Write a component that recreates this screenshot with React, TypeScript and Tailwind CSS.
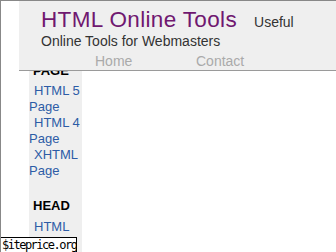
import React from "react";

const pages = [
  { label: "HTML 5" },
  { label: "HTML 4" },
  { label: "XHTML" },
];

export default function App() {
  return (
    <div className="relative flex h-[252px] w-[336px] flex-col overflow-hidden border-t border-l border-[#888] bg-white font-['Liberation_Sans',Arial,sans-serif]">
      {/* header bar */}
      <header className="ml-[18px] h-[70px] shrink-0 border-b border-[#9a9a9a] bg-[#efefef] pl-[22px] pt-[6px]">
        <div className="flex h-[26px] items-baseline">
          <span className="text-[22.5px] leading-[26px] tracking-[0.35px] text-[#701870]">HTML Online Tools</span>
          <span className="ml-[17px] text-[14px] leading-[16px] text-[#333]">Useful</span>
        </div>
        <div className="text-[14px] leading-[16px] text-[#333]">Online Tools for Webmasters</div>
        <nav className="mt-[4px] flex pl-[54px] text-[14px] leading-[16px] text-[#aaa]">
          <span className="w-[101px]">Home</span>
          <span>Contact</span>
        </nav>
      </header>

      {/* left menu */}
      <aside className="ml-[28px] w-[53px] flex-1 overflow-hidden bg-[#efefef] text-[13px] leading-[16px]">
        <div className="-mt-[8.5px]">
          <h3 className="mb-[4px] pl-[4px] font-bold text-black">PAGE</h3>
          {pages.map((p) => (
            <a key={p.label} href="#" className="block text-[#2d5ca6]">
              <span className="block whitespace-nowrap pl-[5px]">{p.label}</span>
              <span className="block">Page</span>
            </a>
          ))}
          <h3 className="mt-[19px] mb-[5px] pl-[4px] font-bold text-black">HEAD</h3>
          <a href="#" className="block whitespace-nowrap pl-[5px] text-[#2d5ca6]">
            HTML
          </a>
        </div>
      </aside>

      {/* watermark */}
      <div className="absolute bottom-[-1px] left-[-1px] h-[16px] w-[77px] overflow-hidden whitespace-nowrap border border-black bg-white pl-[1px] font-['DejaVu_Sans_Mono',monospace] text-[12px] leading-[14px] tracking-[-1.5px] text-black">
        $iteprice.org
      </div>
    </div>
  );
}
